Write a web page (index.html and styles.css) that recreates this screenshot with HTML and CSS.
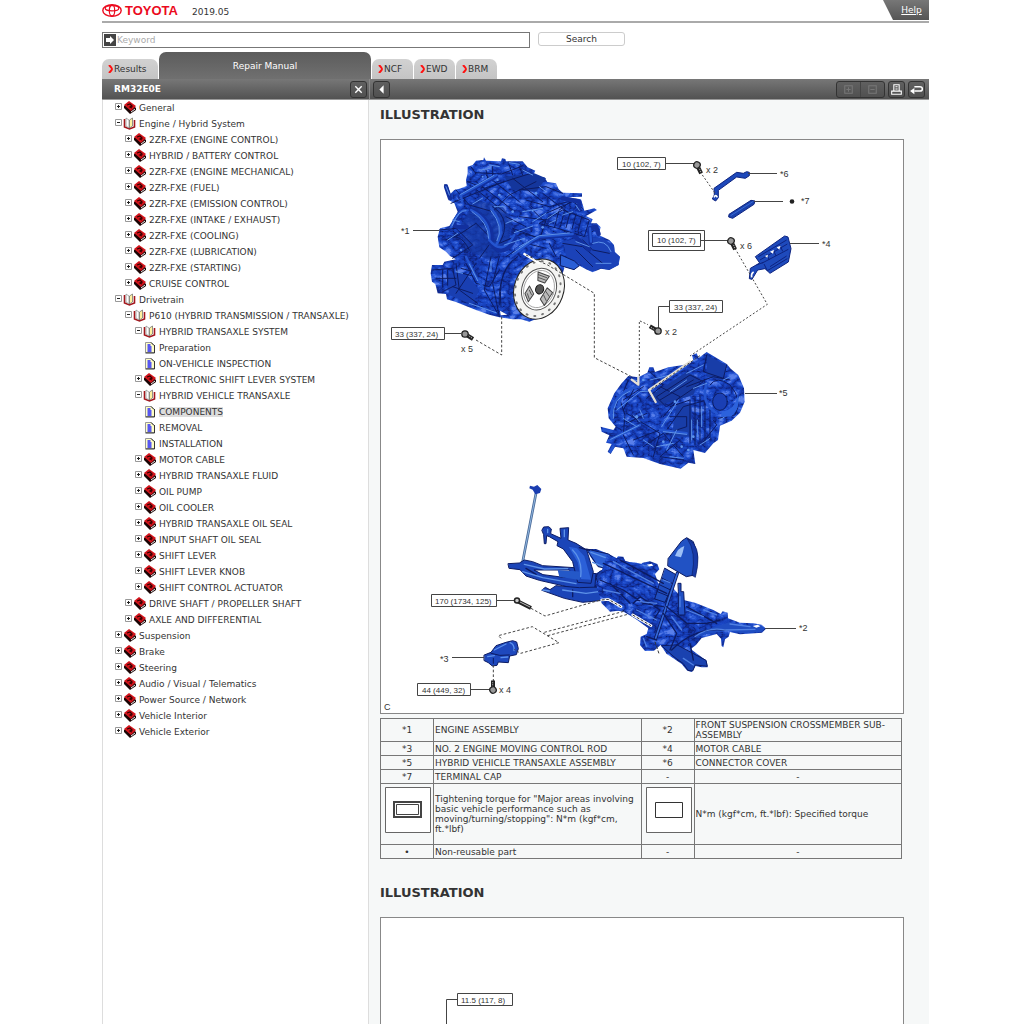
FILE: index.html
```html
<!DOCTYPE html>
<html lang="en">
<head>
<meta charset="utf-8">
<title>RM32E0E Repair Manual</title>
<link rel="stylesheet" href="styles.css">
</head>
<body>
<svg class="defs" aria-hidden="true">
  <symbol id="closed" viewBox="0 0 24 16">
    <path d="M.5 3.500h6v6h-6z" fill="#fff" stroke="#999"/><path d="M2 6.500h3M3.500 5v3" stroke="#222"/>
    <path d="M9 6l5-4 7 6v2l-6 4-6-6z" fill="#1a0505"/><path d="M9 5l5-4 7 5-5 5z" fill="#d3141c"/><path d="M12 5l3-1 2 2-2 1 2 1" fill="none" stroke="#300" stroke-width="1.300"/><path d="M16 12l4-3" stroke="#eee"/>
  </symbol>
  <symbol id="opened" viewBox="0 0 24 16">
    <path d="M.5 3.500h6v6h-6z" fill="#fff" stroke="#999"/><path d="M2 6.500h3" stroke="#222"/>
    <path d="M9.500 3v8l5 2 5-2V4" fill="#fff" stroke="#a3161c" stroke-width="1.600"/><path d="M11 2l3 2v8l-3-2z" fill="#fff" stroke="#777" stroke-width=".6"/><path d="M14.500 4l3-2v8l-3 2z" fill="#fff2a0" stroke="#666" stroke-width=".7"/>
  </symbol>
  <symbol id="doc" viewBox="0 0 24 16">
    <path d="M10.500 2.500h6l3 3v7h-9z" fill="#ffffc4" stroke="#999"/><path d="M19.500 5v8h-9M16 2.500l3 3" fill="none" stroke="#333"/><path d="M12.500 5h3M12.500 7h4M12.500 9h4M12.500 11h4" stroke="#22f" stroke-width="1.400"/>
  </symbol>
  <symbol id="chev" viewBox="0 0 5 8"><path d="M1 0q3 3 3 4t-3 4" fill="none" stroke="#f11" stroke-width="2"/></symbol>
</svg>
<header class="top">
  <a class="brand" href="#"><svg viewBox="0 0 20 13" class="emblem" aria-hidden="true"><g fill="none" stroke="#eb0a1e"><ellipse cx="10" cy="6.500" rx="9.200" ry="5.800" stroke-width="1.400"/><ellipse cx="10" cy="4.300" rx="6.800" ry="2.600" stroke-width="1.200"/><ellipse cx="10" cy="6.500" rx="2.700" ry="5.500" stroke-width="1.200"/></g></svg>TOYOTA</a>
  <span class="version">2019.05</span>
  <a class="help" href="#">Help</a>
</header>
<form class="search">
  <div class="field"><svg viewBox="0 0 12 12" class="go" aria-hidden="true"><path d="M0 0h12v12H0z" fill="#444"/><path d="M2 4h4V2l4 4-4 4V8H2z" fill="#fff"/></svg><input type="text" placeholder="Keyword" aria-label="Keyword"></div>
  <button type="button" class="submit">Search</button>
</form>
<nav class="tabs">
  <a class="tab results" href="#"><svg class="chev"><use href="#chev"/></svg>Results</a>
  <a class="tab active" href="#">Repair Manual</a>
  <a class="tab" href="#"><svg class="chev"><use href="#chev"/></svg>NCF</a>
  <a class="tab" href="#"><svg class="chev"><use href="#chev"/></svg>EWD</a>
  <a class="tab" href="#"><svg class="chev"><use href="#chev"/></svg>BRM</a>
</nav>
<div class="bar">
  <div class="bar-left"><strong>RM32E0E</strong><button type="button" class="tool" aria-label="Close"><svg viewBox="0 0 14 14"><path d="M4 4l6 6M10 4l-6 6" stroke="#fff" stroke-width="1.300"/></svg></button></div>
  <div class="bar-right">
    <button type="button" class="tool" aria-label="Hide contents"><svg viewBox="0 0 14 14"><path d="M9 3v8L5 7z" fill="#fff"/></svg></button>
    <div class="pair"><button type="button" aria-label="Expand"><svg viewBox="0 0 14 14"><path d="M3.500 3.500h7v7h-7zM5 7h4M7 5v4" fill="none" stroke="#777"/></svg></button><button type="button" aria-label="Collapse"><svg viewBox="0 0 14 14"><path d="M3.500 3.500h7v7h-7zM5 7h4" fill="none" stroke="#777"/></svg></button></div>
    <button type="button" class="tool" aria-label="Print"><svg viewBox="0 0 14 14"><path d="M4.500 8V2.500h5V8M2.500 8v3.500h9V8M2 8.500h10M6 4.500h2M6 6.500h2" fill="none" stroke="#fff"/></svg></button>
    <button type="button" class="tool" aria-label="Back"><svg viewBox="0 0 14 14"><path d="M5 4.500h5q2.500 0 2.500 2T10 8.500H5" fill="none" stroke="#fff" stroke-width="1.400"/><path d="M1 8.500l4-3v6z" fill="#fff"/></svg></button>
  </div>
</div>
<main class="panes">
<nav class="tree" aria-label="Contents">
<ul>
<li><a href="#"><svg><use href="#closed"/></svg>General</a></li>
<li><a href="#"><svg><use href="#opened"/></svg>Engine / Hybrid System</a>
<ul>
<li><a href="#"><svg><use href="#closed"/></svg>2ZR-FXE (ENGINE CONTROL)</a></li>
<li><a href="#"><svg><use href="#closed"/></svg>HYBRID / BATTERY CONTROL</a></li>
<li><a href="#"><svg><use href="#closed"/></svg>2ZR-FXE (ENGINE MECHANICAL)</a></li>
<li><a href="#"><svg><use href="#closed"/></svg>2ZR-FXE (FUEL)</a></li>
<li><a href="#"><svg><use href="#closed"/></svg>2ZR-FXE (EMISSION CONTROL)</a></li>
<li><a href="#"><svg><use href="#closed"/></svg>2ZR-FXE (INTAKE / EXHAUST)</a></li>
<li><a href="#"><svg><use href="#closed"/></svg>2ZR-FXE (COOLING)</a></li>
<li><a href="#"><svg><use href="#closed"/></svg>2ZR-FXE (LUBRICATION)</a></li>
<li><a href="#"><svg><use href="#closed"/></svg>2ZR-FXE (STARTING)</a></li>
<li><a href="#"><svg><use href="#closed"/></svg>CRUISE CONTROL</a></li>
</ul></li>
<li><a href="#"><svg><use href="#opened"/></svg>Drivetrain</a>
<ul>
<li><a href="#"><svg><use href="#opened"/></svg>P610 (HYBRID TRANSMISSION / TRANSAXLE)</a>
<ul>
<li><a href="#"><svg><use href="#opened"/></svg>HYBRID TRANSAXLE SYSTEM</a></li>
<li><a href="#"><svg><use href="#doc"/></svg>Preparation</a></li>
<li><a href="#"><svg><use href="#doc"/></svg>ON-VEHICLE INSPECTION</a></li>
<li><a href="#"><svg><use href="#closed"/></svg>ELECTRONIC SHIFT LEVER SYSTEM</a></li>
<li><a href="#"><svg><use href="#opened"/></svg>HYBRID VEHICLE TRANSAXLE</a></li>
<li><a href="#" aria-current="page"><svg><use href="#doc"/></svg><span class="current">COMPONENTS</span></a></li>
<li><a href="#"><svg><use href="#doc"/></svg>REMOVAL</a></li>
<li><a href="#"><svg><use href="#doc"/></svg>INSTALLATION</a></li>
<li><a href="#"><svg><use href="#closed"/></svg>MOTOR CABLE</a></li>
<li><a href="#"><svg><use href="#closed"/></svg>HYBRID TRANSAXLE FLUID</a></li>
<li><a href="#"><svg><use href="#closed"/></svg>OIL PUMP</a></li>
<li><a href="#"><svg><use href="#closed"/></svg>OIL COOLER</a></li>
<li><a href="#"><svg><use href="#closed"/></svg>HYBRID TRANSAXLE OIL SEAL</a></li>
<li><a href="#"><svg><use href="#closed"/></svg>INPUT SHAFT OIL SEAL</a></li>
<li><a href="#"><svg><use href="#closed"/></svg>SHIFT LEVER</a></li>
<li><a href="#"><svg><use href="#closed"/></svg>SHIFT LEVER KNOB</a></li>
<li><a href="#"><svg><use href="#closed"/></svg>SHIFT CONTROL ACTUATOR</a></li>
</ul></li>
<li><a href="#"><svg><use href="#closed"/></svg>DRIVE SHAFT / PROPELLER SHAFT</a></li>
<li><a href="#"><svg><use href="#closed"/></svg>AXLE AND DIFFERENTIAL</a></li>
</ul></li>
<li><a href="#"><svg><use href="#closed"/></svg>Suspension</a></li>
<li><a href="#"><svg><use href="#closed"/></svg>Brake</a></li>
<li><a href="#"><svg><use href="#closed"/></svg>Steering</a></li>
<li><a href="#"><svg><use href="#closed"/></svg>Audio / Visual / Telematics</a></li>
<li><a href="#"><svg><use href="#closed"/></svg>Power Source / Network</a></li>
<li><a href="#"><svg><use href="#closed"/></svg>Vehicle Interior</a></li>
<li><a href="#"><svg><use href="#closed"/></svg>Vehicle Exterior</a></li>
</ul>
</nav>
<article class="content">
<h2>ILLUSTRATION</h2>
<figure class="plate">
<svg viewBox="381 140 522 573" role="img" aria-label="Exploded view of engine, transaxle and crossmember">
<defs>
  <filter id="metal" x="0" y="0" width="1" height="1" color-interpolation-filters="sRGB">
    <feTurbulence type="turbulence" baseFrequency=".03 .04" numOctaves="3" seed="7"/>
    <feColorMatrix values="1.700 0 0 0 0 1.700 0 0 0 0 1.700 0 0 0 0 0 0 0 0 1"/>
    <feComponentTransfer><feFuncR type="table" tableValues=".05 .07 .09 .11 .2 .35"/><feFuncG type="table" tableValues=".12 .18 .25 .29 .38 .5"/><feFuncB type="table" tableValues=".42 .6 .73 .79 .86 .92"/></feComponentTransfer>
    <feComposite in2="SourceGraphic" operator="in"/>
  </filter>
  <g id="bolt"><path d="M0 0L8 5" stroke="#222" stroke-width="4"/><path d="M1 0L7 4" stroke="#aaa" stroke-width="1.200" stroke-dasharray="1 1"/><circle r="3.200" fill="#999" stroke="#222" stroke-width="1.300"/></g>
</defs>

<!-- engine assembly -->
<g transform="translate(376 140) scale(.33333)" stroke-linejoin="round" stroke-linecap="round">
  <path filter="url(#metal)" d="M204 133L214 133 223 162 235 150 250 146 272 138 270 120 275 100 275 80 290 75 300 62 322 60 324 52 330 62 375 64 378 55 388 57 390 64 440 64 455 82 478 92 470 108 505 112 514 126 540 130 548 148 560 158 618 160 618 170 575 172 615 178 622 200 625 212 655 205 663 210 630 228 650 238 645 250 662 250 674 262 668 285 700 300 714 315 716 335 732 350 728 375 700 390 675 386 650 397 630 388 608 376 595 388 556 378 548 350 540 335 565 385 560 400 540 480 495 532 460 545 435 538 410 538 370 532 340 524 300 510 270 498 240 486 213 478 210 462 185 460 178 432 168 425 164 400 168 375 200 375 205 365 240 358 222 348 210 335 190 322 185 290 192 265 220 258 235 235 245 215 235 190 222 182z"/>
  <path d="M560 305l60-15 60 5 34 22 2 20 15 14-4 24-28 14-26-4-24 10-20-10-22-16-30 0z" fill="#1b42b8"/>
  <path d="M300 180l80 20 30 40-20 90-50 30-70-30-20-70z" fill="#1638a0" opacity=".7"/>
  <path d="M385 110l90-10 35 15-30 40-70-5z" fill="#14369c"/>
  <path d="M210 400l60 0 40 50-20 45-70-30z" fill="#193fb2"/>
  <g fill="none" stroke="#0c1b62" stroke-width="3">
    <path d="M285 80l12 18 80 4 62-24M275 125l50 20 60-20 80-25M225 190l60-25 100-40M240 150l40 45 70 20 50-50 80-40M290 140l100 80M300 125l110 85M330 105l100 80M410 115l90 70M430 150l80-10 50 20M450 180l70 20 75-20M500 160l80 60M510 220l80-35 30 20M190 270l50-5 50 50-60 40M240 290l60-40 50 50-40 55M210 300q40-30 70 30M350 200q60 40 20 110l70-30 70 20M270 370l30 60 40 10 30-50M170 390l60-5 10 50-40 20M240 370l10 80 55 40M180 415h60M300 370l-60 90M345 350l-20 100 40 70M370 350l-20 80 20 100M390 350l60-40 60 15M560 310l60 10 60 50M600 330l50 50M620 300l30 30 50 10M490 250l70-40 80 30-15 50-80-25zM590 180l-40 30M320 250q30 20 20 60M430 230l80 10-20 60M460 200l60 60M390 230l60 30M410 265l80 30M425 350q-60 40-55 145M410 360q-45 40-35 140"/>
    <path d="M548 215l-12 45M565 215l-12 45M582 218l-12 45M600 222l-12 45M618 228l-12 45M200 390v50M215 390v45M255 385l30 8M260 400l30 8M330 90l5 25M350 80v25M400 75l10 30M430 80l10 25M230 440l60 20M520 310l20 40"/>
  </g>
  <g fill="none" stroke="#12309f" stroke-width="13"><path d="M250 170l110-62M262 210q-60 60 10 50M285 210q70 30 60 100 40 50 75-20M420 330l70-38 100-8 50 45M645 310l-5-45 20-5 8 22M560 175l50 10v25M210 140l12 35"/></g>
  <g fill="none" stroke="#2455d0" stroke-width="7"><path d="M252 167l110-62M258 185l-3-20M225 262q25-60 50-50M285 210q60 30 55 90 40 50 75-15M420 328l70-38 100-8M645 305l-3-40M345 205q50 60 15 110M405 350l80-60M270 350l30 60 20 30"/></g>
  <g fill="none" stroke="#5d92e8" stroke-width="3"><path d="M254 163l100-57M315 90l30-6M400 68l30 5M290 192l30-18M355 200l30 0M228 258q20-50 42-46M288 215q48 30 50 80M345 212q40 50 18 90M415 278l55-20M430 320l60-33 90-8M410 340l50-35M510 155l-20-15M515 235l30-20M560 225l30-10M520 250l20-10M600 305l40 15M650 310q40-15 55 25M660 370l45 0M215 300l30-20M280 372l25 50M280 490l80 28M470 245l40-25M390 250l35-15M440 215l60-10M220 165l-10-25M230 240l20 5M440 90l30 15M340 75l30 5M240 395l20 5M345 365v30M385 315l60-20M600 196l10 15"/></g>
  <g fill="#5f96ed"><circle cx="370" cy="165" r="4"/><circle cx="410" cy="215" r="4"/><circle cx="440" cy="240" r="4"/><circle cx="470" cy="212" r="3"/><circle cx="500" cy="262" r="4"/><circle cx="365" cy="120" r="3"/><circle cx="320" cy="110" r="3"/><circle cx="480" cy="160" r="4"/><circle cx="255" cy="330" r="3"/></g>
  <path d="M555 345l40 18 15 14-16 12-40-12z" fill="#2b5fd6" stroke="#0c1b62" stroke-width="3"/>
  <g transform="rotate(20 488 450)">
    <ellipse cx="488" cy="447" rx="74" ry="92" fill="#f4f4f2" stroke="#222" stroke-width="3"/>
    <ellipse cx="484" cy="447" rx="66" ry="84" fill="none" stroke="#777" stroke-width="6" stroke-dasharray="3 21"/>
    <ellipse cx="488" cy="447" rx="51" ry="64" fill="#fff" stroke="#555" stroke-width="3"/>
    <ellipse cx="488" cy="447" rx="45" ry="57" fill="none" stroke="#888" stroke-width="2"/>
    <ellipse cx="490" cy="447" rx="12" ry="14" fill="#555" stroke="#111" stroke-width="3"/>
    <g fill="#bbb" stroke="#444" stroke-width="3"><path d="M468 400h36l-6 24h-22zM510 435l20 8-10 45-18-14zM458 448l20 18-7 28-18-20z"/></g>
    <g stroke="#333" stroke-width="2"><path d="M472 407h26M475 415h22M510 447l14 10M508 460l12 12M462 460l10 10M460 472l10 12"/></g>
  </g>
  <path d="M445 342l45 28" stroke="#fff" stroke-width="7"/>
  <path d="M372 512l22 12-20 2z" fill="#fff"/>
  <path d="M450 345l65 30 140 85v193l137 70M300 600l77 45V530" fill="none" stroke="#444" stroke-width="3" stroke-linecap="butt" stroke-dasharray="8 6"/>
</g>

<!-- motor cable, cover and cap -->
<g transform="translate(600 140) scale(.33333)" stroke="#0d2380" stroke-width="3" stroke-linejoin="round">
  <path d="M342 145l68-48 20 3 10-5 8 2v10l-12 8-26-4-55 40v22l-8 10-10-6 6-12z" fill="#1d48ba"/>
  <path d="M387 223l66-42 12 2-3 10-64 42-12-4z" fill="#1a42ac"/><path d="M392 227l68-43" stroke="#3a69d4"/>
  <path d="M466 350l88-62 10 3 9 35-8 40-55 34-15-14-22 4-17 28-8-2 3-31 28-16z" fill="#1e4abc"/>
  <path d="M475 350l85-50M480 360l82-48M485 370l80-42M492 372l10 20 60-36M500 342l8 18M520 330l8 18M540 316l8 18M510 380l50-32M470 375l20-8" fill="none"/>
  <path d="M510 335l12-6-3 12zM530 322l12-5-4 12zM495 348l9-4-2 9z" fill="#fff" stroke="none"/>
  <path d="M300 95l52 74M405 325l97 168L270 648M118 720V542l26 12" fill="none" stroke="#444" stroke-dasharray="6 6"/>
  <path d="M342 172q5-10 10 0M455 412q-2-12 6-16" fill="none" stroke="#fff" stroke-width="5"/>
</g>

<!-- hybrid transaxle -->
<g transform="translate(560 330) scale(.33333)" stroke-linejoin="round" stroke-linecap="round">
  <path filter="url(#metal)" d="M205 138L235 142 262 128 268 112 280 112 285 126 325 112 370 105 400 92 396 76 410 70 416 84 440 66 500 102 512 116 535 135 552 175 554 215 540 248 515 272 480 287 474 330 460 340 435 369 400 360 406 402 385 398 362 416 300 402 250 384 200 380 190 355 165 350 152 372 143 365 155 342 138 338 148 316 125 305 122 290 160 300 167 290 146 265 143 235 163 190 185 160z"/>
  <path d="M275 195l105-70 40 20-20 50-100 30z" fill="#17399f"/>
  <path d="M440 75l60 30-10 45-50-10zM350 220h45v100h-60z" fill="#183da8"/>
  <g fill="none" stroke="#0c1b62" stroke-width="3"><path d="M205 150l-25 60 15 45-5 60 30 60M225 170l-35 70M190 210l60-40M270 125l40 40-50 40M290 200l100-65 40 20-110 75zM300 210l100-60M440 75l-10 50 60 20 10-40M380 170l80-30 50 10M450 165q20-30 60 0 40 45 15 90l-50 10M390 210v130M405 200v145M420 195v145M435 200v140M450 240v90M330 230l60-20M320 300l50-70 70-20M330 260h50v30l-60 20M200 250l100 60-20 70M220 330l80-30 50 10M250 350l60-40 60 70M360 330l-60 50 70 10M300 170l60 30-50 60M460 270l10 15-40 50M200 280l60-30"/></g>
  <g fill="none" stroke="#2455d0" stroke-width="8"><path d="M155 265q-10-50 55-90M175 240q0-60 60-70M150 330l90-45M130 300l25 5M150 365l10-15M300 300l80 10M440 160q-20 60 30 90"/></g>
  <g fill="none" stroke="#5d92e8" stroke-width="3"><path d="M160 265q-5-60 50-82M170 240l70-55 30-2M152 328l85-42M215 148l20 5M305 290l50-80M310 305l70 8M395 270l0 60M412 270v50M270 150l60-15M330 185l50-35M350 300l-30 60M220 255l20 20M250 330l30 20M290 350l50-10M480 270q50-30 60-70M490 150l20-10M380 130l50-25M400 175l40-15M240 240l10 25M190 265l40 25M425 230v60M460 210h20M330 380l40 5M420 345l30-20"/></g>
  <g fill="#5f96ed"><circle cx="310" cy="335" r="4"/><circle cx="345" cy="215" r="4"/><circle cx="365" cy="350" r="4"/><circle cx="250" cy="150" r="4"/><circle cx="400" cy="320" r="4"/><circle cx="230" cy="260" r="5"/><circle cx="385" cy="360" r="4"/></g>
  <ellipse cx="480" cy="215" rx="22" ry="26" fill="#1a3fb4" stroke="#0b1b60" stroke-width="3"/>
  <path d="M485 245q40-5 48-50 10 40-20 65l-30 0z" fill="#2c62dc"/>
  <path d="M390 95L267 180l20 36M235 142v22l-20-15" fill="none" stroke="#e4e0d6" stroke-width="7"/>
  <path d="M420 77L270 180" fill="none" stroke="#444" stroke-width="3" stroke-linecap="butt" stroke-dasharray="7 6"/>
</g>

<!-- front suspension crossmember, left half -->
<g transform="translate(376 475) scale(.33333)" stroke-linejoin="round" stroke-linecap="round">
  <path d="M480 55l-40 205" stroke="#4a6a98" stroke-width="8"/><path d="M480 55l-40 205" stroke="#8fb6e0" stroke-width="3"/>
  <path d="M462 32l12 3 10-5 12 12-4 12-14 4-8-14-10-4z" fill="#1a3db0"/>
  <path filter="url(#metal)" d="M632 222L660 222 700 238 722 250 726 244 740 245 750 262 775 262 810 270 812 450 745 412 715 404 690 385 670 372 650 340 650 300 690 280 655 262 640 240z"/>
  <g fill="#1b45b8" stroke="#0c1b62" stroke-width="3">
    <path d="M397 266L430 264 445 255 470 260 500 272 595 278 605 290 660 296 655 355 560 332 490 316 450 303 432 284 400 280z"/>
    <path d="M498 165L503 156 518 155 526 162 524 176 555 190 552 160 578 158 576 195 600 205 632 225 652 290 645 325 605 322 590 260 562 222 543 212 546 200 520 185 512 182 510 206 505 206 503 180z"/>
    <path d="M498 345L508 337 522 344 540 332 610 338 700 335 745 385 812 385 812 445 745 408 690 375 620 382 565 370 520 354z"/>
  </g>
  <path d="M475 285l105 0 12 16-30 6-60-8z" fill="#fff" stroke="#0c1b62" stroke-width="3"/>
  <path d="M545 285l75 5-10 25-60-10z" fill="#2458c8"/>
  <path d="M578 215l25 5 22 24 20 70-30-2-10-50z" fill="#2b60d8"/>
  <path d="M632 222l65 15 40 30-20 20-50-12z" fill="#2c60d4" stroke="#0c1b62" stroke-width="3"/>
  <circle cx="683" cy="308" r="22" fill="#183ca6" stroke="#0c1b62" stroke-width="3"/><circle cx="680" cy="308" r="9" fill="#3a70e0"/>
  <path d="M610 218l30 8M660 335l50 10 50 50M690 280l100 80M720 260l90 70M750 275l60 50M740 330l50 20M590 345v20M450 280l30 18" fill="none" stroke="#0c1b62" stroke-width="4"/>
  <path d="M445 268l60 14 70-1M590 225q30 30 24 80M645 232l50 18M560 345l70 10 60-8M440 290l60 18 100 18M500 345l20 3M565 165v20M515 163v10M720 290l60 35M650 262l50 20M750 360l30 20" fill="none" stroke="#5d92e8" stroke-width="4"/>
  <!-- engine moving control rod -->
  <path d="M325 540l20-8 15-20 30-10 20-5 12 4 5 20-6 18-20 4-4 20-30-2-4 10-14 2-12-10-12-6z" fill="#1e48bd" stroke="#0c1b62" stroke-width="3"/><path d="M355 525l35-18M335 545l20-3M375 548l20-2M402 503q14 5 12 24" fill="none" stroke="#5a90ed" stroke-width="4"/><path d="M345 535q25 10 55 5M352 550v15" fill="none" stroke="#0c1b62" stroke-width="3"/>
  <path d="M465 400l42 23 180-52M375 490l-8-8 102-27 80 48-115 32-20-12M505 472l250-66M515 482l240-64M352 570v60" fill="none" stroke="#444" stroke-width="3" stroke-linecap="butt" stroke-dasharray="8 6"/>
</g>

<!-- front suspension crossmember, right half -->
<g transform="translate(600 520) scale(.33333)" stroke-linejoin="round" stroke-linecap="round">
  <path filter="url(#metal)" d="M20 105L50 115 70 110 75 122 120 135 128 128 150 124 172 132 178 148 165 162 175 190 215 200 232 218 250 240 285 248 340 270 362 282 368 274 383 278 384 295 420 308 460 310 485 314 498 326 486 338 420 343 390 336 386 350 375 358 370 382 365 378 363 356 350 342 305 354 288 375 272 387 292 402 320 422 323 442 305 442 286 438 275 456 262 452 245 432 220 415 200 402 182 375 162 392 135 393 120 375 122 350 140 342 145 325 100 292 72 270 30 275 5 250 -10 200z"/>
  <path d="M388 306l40 10 55 0 12 10-12 10-60 4-35-8-70 10-30 12 15-20 50-16z" fill="#1f4dc2"/>
  <path d="M185 378l40 35 25 18 14 20 14 2 8-18 36 4-4-18-60-32-26-14z" fill="#1a42b0" stroke="#0c1b62" stroke-width="3"/>
  <path d="M205 115l40-52 15-10 20 12 12 40-8 60-25 5-55-32z" fill="#2152c4" stroke="#0c1b62" stroke-width="3"/>
  <path d="M262 56q28 40 14 110l10 6q18-70-4-100z" fill="#183aa6" stroke="#0c1b62" stroke-width="2"/>
  <path d="M225 108q8-24 28-30-5 22-10 34z" fill="#9dc0f6"/>
  <path d="M195 145l35 20-35 82-30-10z" fill="#1f4ec0" stroke="#0c1b62" stroke-width="3"/><path d="M187 175l35 18M180 195l34 16M172 215l35 14" stroke="#0c1b62" stroke-width="3"/>
  <path d="M232 160l-65 195" stroke="#0c1b62" stroke-width="10"/><path d="M232 160l-65 195" stroke="#3468d8" stroke-width="5"/>
  <path d="M235 190h8v25h8l4 70h-20v-70z" fill="#2050c4" stroke="#0c1b62" stroke-width="3"/>
  <g fill="none" stroke="#0c1b62" stroke-width="4"><path d="M10 130l190 90M60 120l130 70M0 180l70 30 60 40 60 10M30 190l60 60M200 260l60 50 60 0 40-10M190 280l40 60-20 50M260 260l90 50M215 390q70-70 160-60M140 350l30 10M270 370l10 50M100 250l20-20 60 40-20 30"/></g>
  <g fill="none" stroke="#5080e2" stroke-width="4"><path d="M40 125l120 65M130 136l20 4M10 210l50 10M110 270l60 30M215 290l30 40M285 350q40-30 90-20l90-2M390 312l60 8M190 180l20 8M260 270l50 20M250 415l30 20M130 355l10 25M240 230v30M310 270l40 15M120 245l50 5"/></g>
  <path d="M458 318l15-4 8 5-12 4zM140 134l15-3 5 6-12 2z" fill="#fff"/>
  <path d="M5 240l20-2 38 22M98 285l55 32" fill="none" stroke="#fff" stroke-width="8"/><path d="M5 240l20-2 38 22M98 285l55 32M165 365l12 36" fill="none" stroke="#333" stroke-width="3" stroke-linecap="butt" stroke-dasharray="9 5"/>
</g>

<g fill="none" stroke="#444">
  <path d="M617.500 157.500h48v12h-48zM666 163.500h28M648.500 230.500h56v20h-56zM652.500 233.500h48v13h-48zM701 240.500h28M669.500 300.500h53v12h-53zM669 306.500h-10.500v24M391.500 327.500h53v12h-53zM445 333.500h16M431.500 594.500h65v12h-65zM497 600.500h17M417.500 683.500h53v12h-53zM471 689.500h20M413 230.500h26M765 628.500h31M452 657.500h32M790 243.500h29M745 393.500h32M748 173.500h29M754 201.500h29"/>
</g>
<use href="#bolt" transform="translate(697 165) rotate(32)"/><use href="#bolt" transform="translate(731 241) rotate(32)"/><use href="#bolt" transform="translate(658 331) rotate(178)"/><use href="#bolt" transform="translate(465 334)"/><use href="#bolt" transform="translate(493 690) rotate(-122)"/>
<path d="M517 601l14 7" stroke="#222" stroke-width="4"/><path d="M518 601l12 6" stroke="#bbb"/><circle cx="517" cy="600.500" r="2.500" fill="#ccc" stroke="#222" stroke-width="1.500"/>
<circle cx="792" cy="201.500" r="2.300" fill="#222"/>
<g class="torque"><text x="622" y="167">10 (102, 7)</text><text x="657" y="243">10 (102, 7)</text><text x="674" y="310">33 (337, 24)</text><text x="395" y="337">33 (337, 24)</text><text x="435" y="604">170 (1734, 125)</text><text x="422" y="693">44 (449, 32)</text></g>
<g class="callout"><text x="401" y="234">*1</text><text x="799" y="631">*2</text><text x="440" y="662">*3</text><text x="822" y="247">*4</text><text x="779" y="396">*5</text><text x="780" y="177">*6</text><text x="801" y="204">*7</text><text x="706" y="173">x 2</text><text x="740" y="249">x 6</text><text x="665" y="335">x 2</text><text x="461" y="352">x 5</text><text x="499" y="693">x 4</text><text x="384" y="710">C</text></g>
</svg>
</figure>
<table class="legend">
<colgroup><col class="key"><col class="name"><col class="key"><col class="name"></colgroup>
<tbody>
<tr><td class="mid">*1</td><td>ENGINE ASSEMBLY</td><td class="mid">*2</td><td>FRONT SUSPENSION CROSSMEMBER SUB-ASSEMBLY</td></tr>
<tr><td class="mid">*3</td><td>NO. 2 ENGINE MOVING CONTROL ROD</td><td class="mid">*4</td><td>MOTOR CABLE</td></tr>
<tr><td class="mid">*5</td><td>HYBRID VEHICLE TRANSAXLE ASSEMBLY</td><td class="mid">*6</td><td>CONNECTOR COVER</td></tr>
<tr><td class="mid">*7</td><td>TERMINAL CAP</td><td class="mid">-</td><td class="mid">-</td></tr>
<tr class="symbols"><td class="sym"><svg viewBox="0 0 46 46" aria-hidden="true"><g fill="#fff" stroke="#666"><path d="M.5.5h45v45H.5z"/><path d="M9 15h27v15H9z" stroke="#444" stroke-width="2"/><path d="M11.500 17.500h22v10h-22z" stroke="#444"/></g></svg></td><td>Tightening torque for "Major areas involving basic vehicle performance such as moving/turning/stopping": N*m (kgf*cm, ft.*lbf)</td><td class="sym"><svg viewBox="0 0 46 46" aria-hidden="true"><g fill="#fff" stroke="#666"><path d="M.5.5h45v45H.5z"/><path d="M9.500 15.500h27v15h-27z" stroke="#333"/></g></svg></td><td>N*m (kgf*cm, ft.*lbf): Specified torque</td></tr>
<tr><td class="mid">•</td><td>Non-reusable part</td><td class="mid">-</td><td class="mid">-</td></tr>
</tbody>
</table>
<h2 class="next">ILLUSTRATION</h2>
<figure class="plate">
<svg viewBox="0 0 522 573" role="img" aria-label="Torque specification"><path d="M76.500 75.500h55v12h-55zM76 81.500h-10.500V573" fill="none" stroke="#444"/><text class="torque" x="80" y="85">11.5 (117, 8)</text></svg>
</figure>
</article>
</main>
</body>
</html>
```
FILE: styles.css
```css
* { box-sizing: border-box; }
body {
  margin: 0;
  padding: 0 95px 0 102px;
  height: 100vh;
  display: flex;
  flex-direction: column;
  background: #fff;
  color: #333;
  font: 9px/10px "DejaVu Sans", Verdana, sans-serif;
}
a { color: inherit; text-decoration: none; }
button { font: inherit; color: inherit; padding: 0; margin: 0; }
.defs { position: absolute; width: 0; height: 0; }

.top {
  flex: none;
  display: flex;
  align-items: center;
  height: 23px;
  border-bottom: 2px solid #aaa;
}
.brand {
  display: flex;
  align-items: center;
  gap: 3px;
  color: #eb0a1e;
  font: bold 13px/14px "Liberation Sans", Arial, sans-serif;
}
.emblem { width: 20px; height: 13px; }
.version { margin-left: 14px; padding-top: 2px; }
.help {
  margin-left: auto;
  align-self: flex-start;
  width: 46px;
  height: 20px;
  padding-left: 11px;
  line-height: 20px;
  text-align: center;
  color: #fff;
  text-decoration: underline;
  background: linear-gradient(#777, #555);
  clip-path: polygon(0 0, 100% 0, 100% 100%, 10px 100%);
}

.search { flex: none; display: flex; gap: 8px; margin: 9px 0 4px; }
.field {
  display: flex;
  align-items: center;
  width: 428px;
  height: 16px;
  padding-left: 1px;
  border: 1px solid #777;
}
.go { width: 12px; height: 12px; }
.field input {
  flex: 1;
  min-width: 0;
  border: 0;
  outline: 0;
  padding: 0 1px;
  font: inherit;
  background: none;
}
.field input::placeholder { color: #aaa; opacity: 1; }
.submit {
  width: 87px;
  height: 14px;
  background: #fff;
  border: 1px solid #ccc;
  border-radius: 3px;
}

.tabs { flex: none; display: flex; align-items: flex-end; gap: 1px; height: 27px; }
.tab {
  display: flex;
  align-items: center;
  gap: 1px;
  width: 41px;
  height: 20px;
  padding-left: 6px;
  border-radius: 7px 7px 0 0;
  background: linear-gradient(#d2d2d2, #c4c4c4);
}
.tab.results { width: 56px; }
.tab.active {
  width: 212px;
  height: 27px;
  padding: 0;
  justify-content: center;
  color: #fff;
  background: linear-gradient(#5c5c5c, #707070);
}
.chev { width: 5px; height: 8px; }

.bar, .panes { display: grid; grid-template-columns: 267px minmax(0, 1fr); }
.bar {
  flex: none;
  height: 21px;
  background: linear-gradient(#777, #525252);
  border-bottom: 1px solid #999;
}
.bar-left, .bar-right { display: flex; align-items: center; }
.bar-left { padding: 0 2px 0 12px; justify-content: space-between; color: #fff; }
.bar-right { padding: 0 4px 0 3px; gap: 3px; border-left: 1px solid #888; }
.tool, .pair {
  height: 17px;
  border: 1px solid #333;
  border-radius: 3px;
  background: linear-gradient(#606060, #505050);
}
.tool { width: 17px; }
.tool svg, .pair svg { display: block; width: 15px; height: 15px; }
.pair { display: flex; width: 49px; margin-left: auto; }
.pair button { flex: 1; display: grid; place-items: center; border: 0; background: none; }
.pair button + button { border-left: 1px solid #444; }

.panes { flex: 1; min-height: 0; }
.tree, .content { overflow: auto; scrollbar-width: none; }
.tree { border: solid #ddd; border-width: 0 1px; }
.tree ul { list-style: none; margin: 0; padding: 0; }
.tree > ul { padding-left: 12px; }
.tree ul ul { padding-left: 10px; }
.tree a { display: flex; align-items: center; height: 16px; white-space: nowrap; }
.tree svg { flex: none; width: 24px; height: 16px; }
.current { background: #ddd; }

.content { padding: 8px 25px 0 11px; background: #f6f8f8; }
h2 { margin: 0; font-size: 13px; line-height: 14px; }
.plate { margin: 17px 0 0; border: 1px solid #888; background: #fff; }
.plate svg { display: block; width: 100%; }
.torque, .callout { font-family: "Liberation Sans", Arial, sans-serif; fill: #333; }
.torque { font-size: 8px; }
.callout { font-size: 9px; }

.legend {
  width: calc(100% - 2px);
  margin-top: 4px;
  border-collapse: collapse;
  table-layout: fixed;
}
.legend .key { width: 53px; }
.legend td { border: 1px solid #777; padding: 1px; }
.legend tr { height: 14px; }
.legend .mid { text-align: center; }
.legend .symbols { height: 61px; }
.legend .sym { vertical-align: top; padding: 3px 3px 0 4px; }
.legend .sym svg { display: block; width: 46px; height: 46px; }
.next { margin-top: 27px; }
```
